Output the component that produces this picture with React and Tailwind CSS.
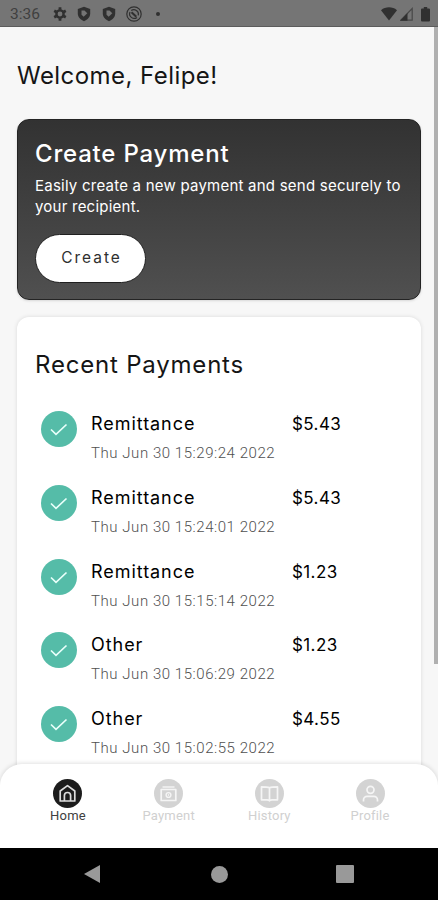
const payments = [
  { type: "Remittance", date: "Thu Jun 30 15:29:24 2022", amount: "$5.43" },
  { type: "Remittance", date: "Thu Jun 30 15:24:01 2022", amount: "$5.43" },
  { type: "Remittance", date: "Thu Jun 30 15:15:14 2022", amount: "$1.23" },
  { type: "Other", date: "Thu Jun 30 15:06:29 2022", amount: "$1.23" },
  { type: "Other", date: "Thu Jun 30 15:02:55 2022", amount: "$4.55" },
];

const HomeIcon = () => (
  <>
    <path d="M7.2 12 14.5 6.6l7.3 5.4v10H7.2z" />
    <path d="M11.4 22v-5.4a3.1 3.1 0 0 1 6.2 0V22" />
  </>
);

const PaymentIcon = () => (
  <>
    <path d="M8.500 8h12" strokeWidth="1.400" />
    <path d="M7.200 10.500h14.600v11H7.200z" />
    <circle cx="14.500" cy="16" r="2.400" strokeWidth="1.400" />
    <path d="M14.500 15.200v1.600" strokeWidth="1.200" />
  </>
);

const HistoryIcon = () => (
  <path d="M14.5 8.8c-1.600-.8-4.500-1-8-1v13h5.500c1 0 2 .3 2.500 1 .5-.7 1.500-1 2.500-1h5.500v-13c-3.500 0-6.400.2-8 1zM14.500 8.800v12.700" />
);

const ProfileIcon = () => (
  <>
    <circle cx="14.5" cy="10.8" r="3.5" />
    <path d="M7.5 22.5V21a3.6 3.6 0 0 1 3.6-3.6h6.8a3.6 3.6 0 0 1 3.6 3.6v1.5" />
  </>
);

const tabs = [
  { label: "Home", icon: HomeIcon, active: true },
  { label: "Payment", icon: PaymentIcon },
  { label: "History", icon: HistoryIcon },
  { label: "Profile", icon: ProfileIcon },
];

const Shield = () => (
  <svg width="14" height="16" viewBox="0 0 14 16">
    <path d="M7 .8 13.2 3v4.6c0 3.5-2.4 6.2-6.2 7.6C3.2 13.800.8 11.100.8 7.600V3z" fill="#303030" />
    <path d="M4.5 4.5h3l2.800 2.700-3.600 3.600-2.200-2z" fill="#757575" />
  </svg>
);

const StatusBar = () => (
  <div className="flex h-[27px] shrink-0 items-center border-b border-[#5c5c5c] bg-[#757575] pl-[10px] pr-[8px] pt-[2px]">
    <span className="w-[43px] pt-[2px] font-['Roboto',sans-serif] text-[15.5px] text-[#404040]">
      3:36
    </span>
    <svg width="14" height="14" viewBox="0 0 14 14">
      <circle cx="7" cy="7" r="3.6" fill="none" stroke="#303030" strokeWidth="2.4" />
      <path
        d="M7 .3v2.5M7 11.2v2.5M1.2 3.7l2.2 1.2M10.6 9.1l2.2 1.2M1.2 10.3l2.2-1.2M10.6 4.9l2.2-1.2"
        stroke="#303030"
        strokeWidth="2.8"
      />
    </svg>
    <div className="ml-[10px] flex items-center gap-[11px]">
      <Shield />
      <Shield />
    </div>
    <svg className="ml-[10px]" width="16" height="16" viewBox="0 0 16 16" fill="none" stroke="#303030">
      <circle cx="8" cy="8" r="7.2" strokeWidth="1.2" />
      <path d="M11 11.4a4.6 4.6 0 0 1-7-5.500M5.200 4.500a4.600 4.600 0 0 1 7.100 4.800" strokeWidth="1.2" />
      <path d="m5.5 6.2 4.8 4.5" strokeWidth="2" />
    </svg>
    <span className="ml-[14px] h-1 w-1 rounded-full bg-[#303030]" />
    <div className="ml-auto flex items-center">
      <svg width="16" height="14" viewBox="0 0 16 14">
        <path d="M0 3.200C4.500-.6 11.500-.6 16 3.200L8 13.500z" fill="#303030" />
      </svg>
      <svg className="ml-[3px]" width="13" height="14" viewBox="0 0 13 14">
        <path d="M.8 13.200 12.200 1.500v11.700z" fill="none" stroke="#484848" strokeWidth="1.2" />
        <path d="M0 13.800 7.500 6v7.800z" fill="#303030" />
      </svg>
      <svg className="ml-[8px]" width="9" height="15" viewBox="0 0 9 15">
        <path d="M2.800 0h3.400v1.500H8A1 1 0 0 1 9 2.500V13.500a1 1 0 0 1-1 1H1a1 1 0 0 1-1-1V2.500a1 1 0 0 1 1-1h1.800z" fill="#303030" />
      </svg>
    </div>
  </div>
);

const CreateCard = () => (
  <section className="mt-[26px] h-[181px] rounded-[12px] border border-[#242424] bg-linear-to-b from-[#323232] to-[#505050] px-[17px] pt-[17px] text-white shadow-sm">
    <h2 className="whitespace-nowrap text-[24px] font-medium leading-[34px] tracking-[0.8px]">
      Create Payment
    </h2>
    <p className="mt-[5px] whitespace-nowrap text-[15px] leading-[20.5px] tracking-[0.23px]">
      Easily create a new payment and send securely to
      <br />
      your recipient.
    </p>
    <button className="mt-[17px] flex h-[49px] w-[111px] items-center justify-center rounded-full border border-[#202020] bg-white pb-[2px] pl-[2px] text-[15.5px] tracking-[2px] text-[#303030]">
      Create
    </button>
  </section>
);

const PaymentRow = ({ payment }) => (
  <li className="flex h-[73.8px]">
    <span className="flex h-9 w-9 items-center justify-center rounded-full bg-[#55bca8]">
      <svg width="20" height="16" viewBox="0 0 20 16" fill="none" stroke="#e9fffa" strokeWidth="1.7">
        <path d="m2 8.5 5 4.8L17.5 3.5" />
      </svg>
    </span>
    <div className="ml-[14px] w-[201px]">
      <p className="text-[18px] leading-[26px] tracking-[0.95px] text-black">{payment.type}</p>
      <p className="mt-[3px] whitespace-nowrap font-['Roboto',sans-serif] text-[15px] font-light leading-[26px] tracking-[0.55px] text-[#505050]">
        {payment.date}
      </p>
    </div>
    <p className="text-[17px] leading-[26px] tracking-[0.4px] text-black">{payment.amount}</p>
  </li>
);

const TabBar = () => (
  <nav className="absolute inset-x-0 bottom-0 flex h-[84px] justify-center rounded-t-[22px] bg-white pt-[15px] shadow-[0_-1px_4px_rgba(0,0,0,0.12)]">
    {tabs.map(({ label, icon: Icon, active }) => (
      <div key={label} className="flex w-[100.7px] flex-col items-center">
        <svg width="29" height="29" viewBox="0 0 29 29" fill="none">
          <circle cx="14.5" cy="14.5" r="14.5" fill={active ? "#1c1c1c" : "#d3d3d3"} />
          <g stroke={active ? "#dddddd" : "#f5f5f5"} strokeWidth="1.7" strokeLinejoin="round">
            <Icon />
          </g>
        </svg>
        <span
          className={`font-['Roboto',sans-serif] text-[13px] leading-[15px] tracking-[0.2px] ${
            active ? "text-[#404040]" : "text-[#d0d0d0]"
          }`}
        >
          {label}
        </span>
      </div>
    ))}
  </nav>
);

const SystemNav = () => (
  <div className="flex h-[52px] shrink-0 items-center bg-black pl-[83px]">
    <svg width="18" height="20" viewBox="0 0 18 20">
      <path d="M17 1v18L1 10z" fill="#999" />
    </svg>
    <span className="ml-[110px] h-[17px] w-[17px] rounded-full bg-[#999]" />
    <span className="ml-[108px] h-[18px] w-[18px] rounded-[1px] bg-[#999]" />
  </div>
);

export default function App() {
  return (
    <div className="flex h-[900px] w-[438px] flex-col overflow-hidden bg-[#f7f7f7] font-['Inter','Open_Sans',sans-serif]">
      <StatusBar />
      <div className="relative flex h-[821px] overflow-hidden">
        <main className="h-[821px] w-[434px] pl-[17px] pr-[13px] pt-[31px]">
          <h1 className="text-[24px] leading-[35px] tracking-[0.45px] text-[#151515]">
            Welcome, Felipe!
          </h1>
          <CreateCard />
          <section className="mt-[17px] h-[560px] rounded-[12px] bg-white px-[18px] pt-[30px] shadow-[0_0_4px_rgba(0,0,0,0.12)]">
            <h2 className="text-[24px] leading-[36px] tracking-[0.8px] text-[#151515]">
              Recent Payments
            </h2>
            <ul className="ml-[6px] mt-[28px]">
              {payments.map((payment, index) => (
                <PaymentRow key={index} payment={payment} />
              ))}
            </ul>
          </section>
        </main>
        <div className="h-[637px] w-1 bg-[#b0b0b0]" />
        <TabBar />
      </div>
      <SystemNav />
    </div>
  );
}
